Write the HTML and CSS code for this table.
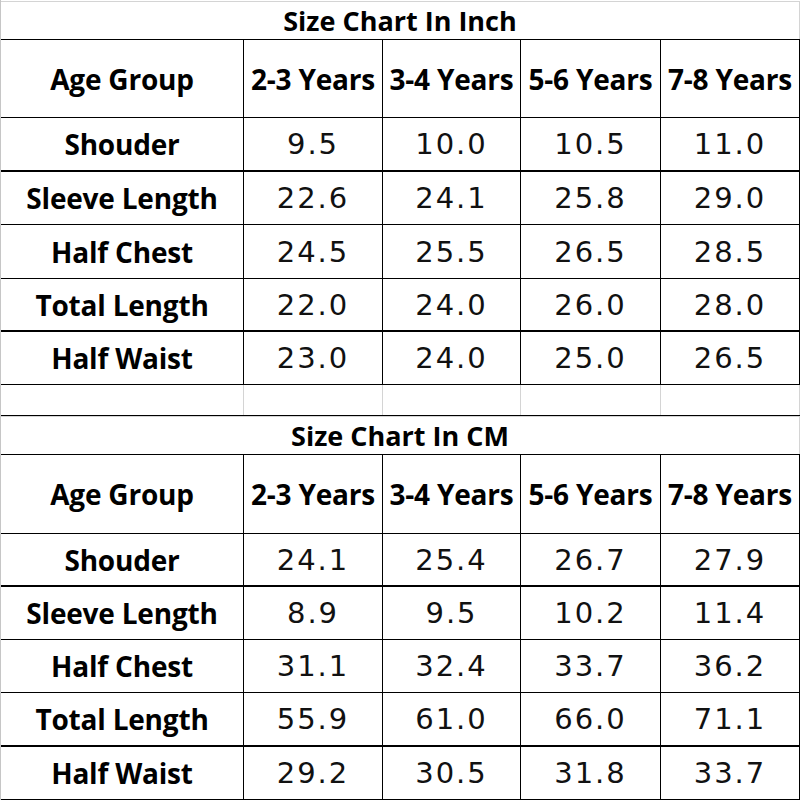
FILE: index.html
```html
<!DOCTYPE html>
<html lang="en">
<head>
<meta charset="utf-8">
<title>Size Chart</title>
<link rel="stylesheet" href="styles.css">
</head>
<body>
<div class="sheet">
  <div class="row title-row"><div class="cell span">Size Chart In Inch</div></div>
  <div class="row head-row">
    <div class="cell c1 lbl">Age Group</div>
    <div class="cell c2 lbl">2-3 Years</div>
    <div class="cell c3 lbl">3-4 Years</div>
    <div class="cell c4 lbl">5-6 Years</div>
    <div class="cell c5 lbl">7-8 Years</div>
  </div>
  <div class="row r54 thick"><div class="cell c1 lbl">Shouder</div><div class="cell c2 num">9.5</div><div class="cell c3 num">10.0</div><div class="cell c4 num">10.5</div><div class="cell c5 num">11.0</div></div>
  <div class="row r53"><div class="cell c1 lbl">Sleeve Length</div><div class="cell c2 num">22.6</div><div class="cell c3 num">24.1</div><div class="cell c4 num">25.8</div><div class="cell c5 num">29.0</div></div>
  <div class="row r54"><div class="cell c1 lbl">Half Chest</div><div class="cell c2 num">24.5</div><div class="cell c3 num">25.5</div><div class="cell c4 num">26.5</div><div class="cell c5 num">28.5</div></div>
  <div class="row r53 thick"><div class="cell c1 lbl">Total Length</div><div class="cell c2 num">22.0</div><div class="cell c3 num">24.0</div><div class="cell c4 num">26.0</div><div class="cell c5 num">28.0</div></div>
  <div class="row r53"><div class="cell c1 lbl">Half Waist</div><div class="cell c2 num">23.0</div><div class="cell c3 num">24.0</div><div class="cell c4 num">25.0</div><div class="cell c5 num">26.5</div></div>
  <div class="row spacer-row"><div class="cell c1 grid"></div><div class="cell c2 grid"></div><div class="cell c3 grid"></div><div class="cell c4 grid"></div><div class="cell c5 grid"></div></div>
  <div class="row title-row"><div class="cell span">Size Chart In CM</div></div>
  <div class="row head-row head2">
    <div class="cell c1 lbl">Age Group</div>
    <div class="cell c2 lbl">2-3 Years</div>
    <div class="cell c3 lbl">3-4 Years</div>
    <div class="cell c4 lbl">5-6 Years</div>
    <div class="cell c5 lbl">7-8 Years</div>
  </div>
  <div class="row r53 thick"><div class="cell c1 lbl">Shouder</div><div class="cell c2 num">24.1</div><div class="cell c3 num">25.4</div><div class="cell c4 num">26.7</div><div class="cell c5 num">27.9</div></div>
  <div class="row r53"><div class="cell c1 lbl">Sleeve Length</div><div class="cell c2 num">8.9</div><div class="cell c3 num">9.5</div><div class="cell c4 num">10.2</div><div class="cell c5 num">11.4</div></div>
  <div class="row r53"><div class="cell c1 lbl">Half Chest</div><div class="cell c2 num">31.1</div><div class="cell c3 num">32.4</div><div class="cell c4 num">33.7</div><div class="cell c5 num">36.2</div></div>
  <div class="row r54 thick"><div class="cell c1 lbl">Total Length</div><div class="cell c2 num">55.9</div><div class="cell c3 num">61.0</div><div class="cell c4 num">66.0</div><div class="cell c5 num">71.1</div></div>
  <div class="row r53"><div class="cell c1 lbl">Half Waist</div><div class="cell c2 num">29.2</div><div class="cell c3 num">30.5</div><div class="cell c4 num">31.8</div><div class="cell c5 num">33.7</div></div>
</div>
</body>
</html>
```

FILE: styles.css
```css
html, body {
  margin: 0;
  padding: 0;
  background: #ffffff;
}

.sheet {
  width: 800px;
  height: 800px;
  box-sizing: border-box;
  padding-top: 1px;
  border-left: 1px solid #c6c6c6;
  color: #000000;
  overflow: hidden;
}

.row {
  display: flex;
  box-sizing: border-box;
  border-bottom: 1px solid #000000;
}

.row.thick {
  border-bottom-width: 2px;
}

.title-row {
  height: 39px;
  border-top: 1px solid #d4d4d4;
}

.head-row { height: 78px; }
.head2 { height: 79px; }
.r53 { height: 53px; }
.r54 { height: 54px; }

.spacer-row { height: 31px; }

.cell {
  box-sizing: border-box;
  display: flex;
  align-items: center;
  justify-content: center;
  border-right: 1px solid #000000;
  white-space: nowrap;
}

.cell.grid { border-right-color: #d4d4d4; }

.c1 { width: 243px; }
.c2 { width: 139px; }
.c3 { width: 138px; }
.c4 { width: 140px; }
.c5 { width: 139px; }

.span {
  width: 799px;
  border-right: 1px solid #d4d4d4;
  font-family: "Open Sans", "Liberation Sans", sans-serif;
  font-weight: 700;
  font-size: 27px;
}

.lbl {
  font-family: "Open Sans", "Liberation Sans", sans-serif;
  font-weight: 700;
  font-size: 28px;
  letter-spacing: -0.2px;
}

.num {
  font-family: "DejaVu Sans", "Verdana", sans-serif;
  font-size: 29px;
  letter-spacing: 2px;
  color: #111111;
}
```
